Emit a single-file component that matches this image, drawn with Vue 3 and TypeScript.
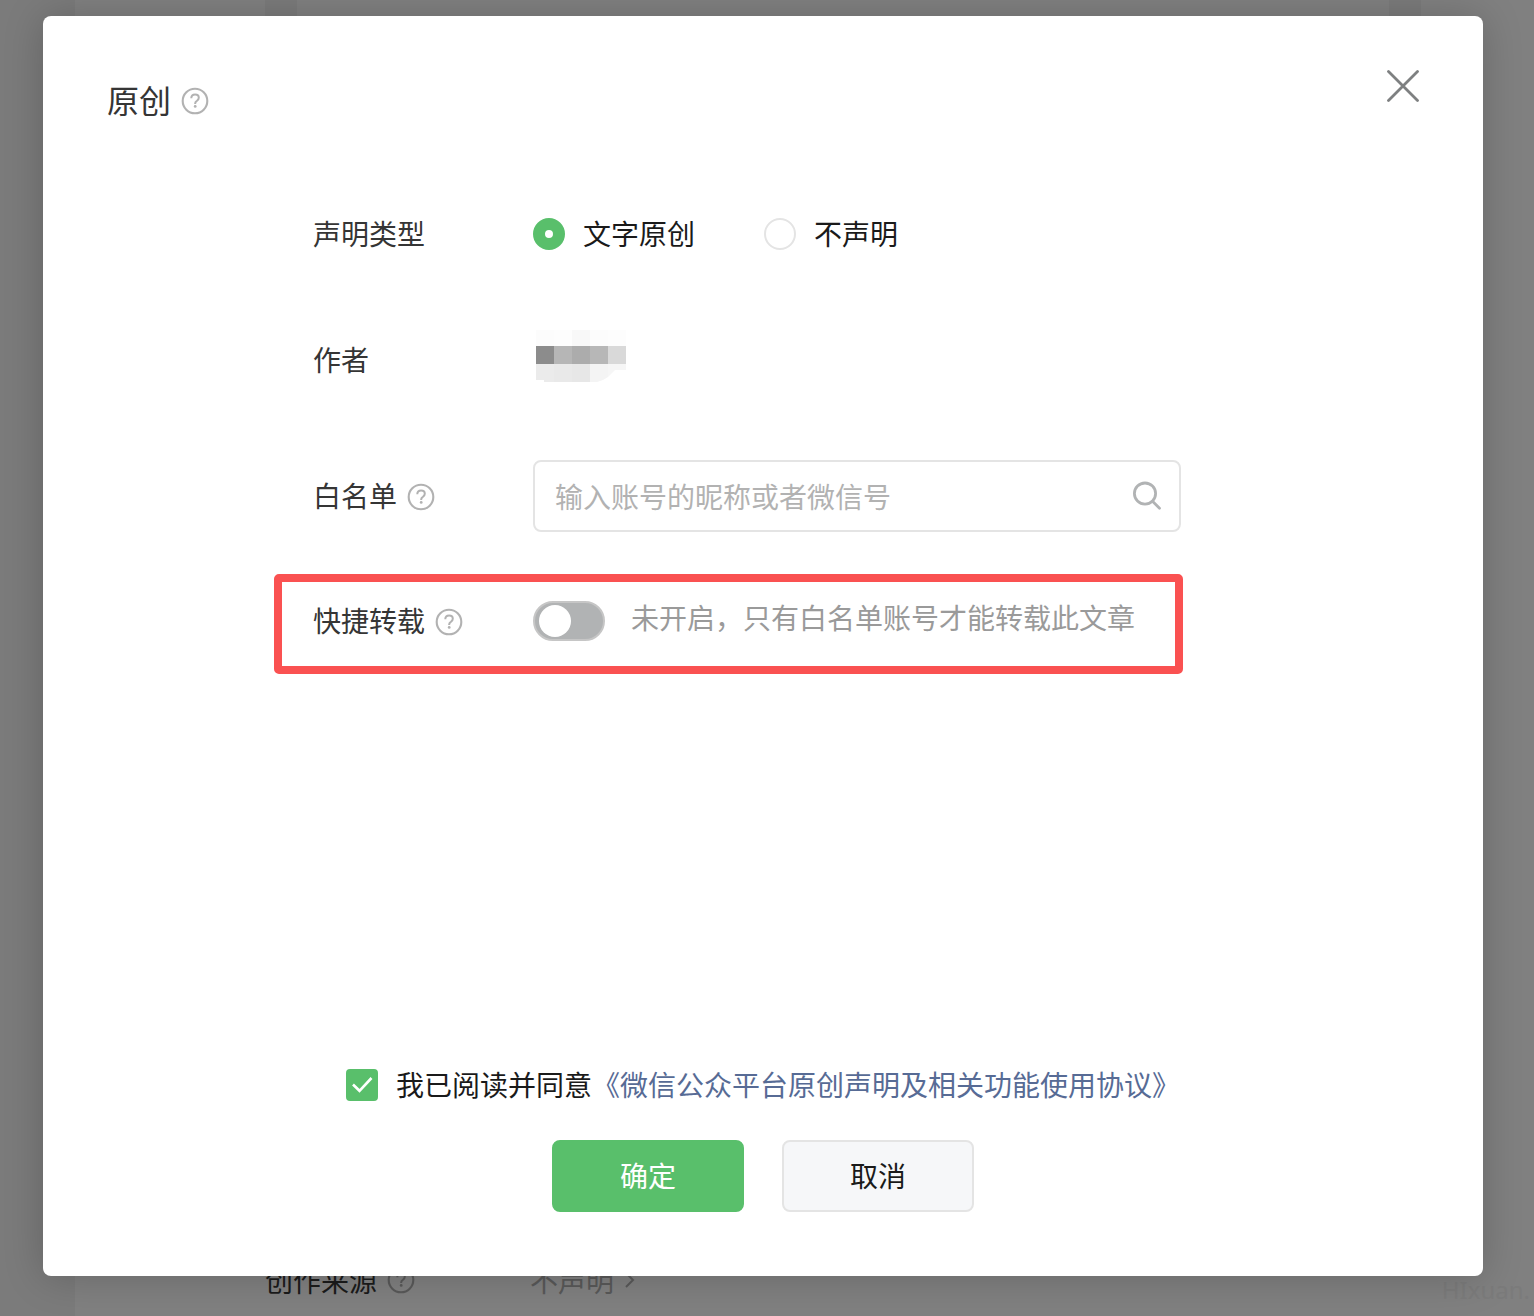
<script setup lang="ts">
import { ref } from 'vue'

const declareType = ref<'text' | 'none'>('text')
const keyword = ref('')
const quickReprint = ref(false)
const agreed = ref(true)

const declareOptions: { value: 'text' | 'none'; label: string }[] = [
  { value: 'text', label: '文字原创' },
  { value: 'none', label: '不声明' },
]

const mosaicRows = [
  { y: 0, height: 16, cells: ['#fcfcfc', '#fdfdfd', '#f8f8f8', '#fcfcfc', '#fdfdfd'] },
  { y: 16, height: 18, cells: ['#8c8c8c', '#b6b6b6', '#acacac', '#b7b7b7', '#d9d9d9'] },
]
</script>

<template>
  <div class="page">
    <div class="editor" aria-hidden="true">
      <div class="editor-top">
        <span class="stripe"></span>
        <span class="stripe"></span>
      </div>
      <div class="source">
        <span class="source-label">
          创作来源
          <svg class="help" viewBox="0 0 28 28"><use href="#help-shape" /></svg>
        </span>
        <span class="source-value">
          不声明
          <svg class="chevron" viewBox="0 0 12 20"><path d="M2 3l7 7-7 7" /></svg>
        </span>
        <span class="watermark">HIxuan.</span>
      </div>
    </div>

    <div class="overlay">
      <section class="dialog" role="dialog" aria-labelledby="dialog-title">
        <svg class="defs" aria-hidden="true">
          <symbol id="help-shape" viewBox="0 0 28 28">
            <circle cx="14" cy="14" r="12.3" fill="none" stroke="currentColor" stroke-width="2.1" />
            <path
              d="M10.3 11.2c0-2.200 1.500-3.700 3.800-3.700 2.200 0 3.700 1.300 3.700 3.200 0 1.300-.6 2.100-1.800 3-1.300.9-1.800 1.400-1.800 2.500v.7"
              fill="none" stroke="currentColor" stroke-width="2" />
            <circle cx="14.200" cy="19.400" r="1.400" fill="currentColor" />
          </symbol>
        </svg>

        <header class="head">
          <h1 id="dialog-title" class="title">
            原创
            <svg class="help" viewBox="0 0 28 28"><use href="#help-shape" /></svg>
          </h1>
          <button class="close" type="button" aria-label="关闭">
            <svg viewBox="0 0 32 32"><path d="M1.500 1.500L30.500 30.500M30.500 1.500L1.500 30.500" /></svg>
          </button>
        </header>

        <form class="form" @submit.prevent>
          <div class="row" role="radiogroup" aria-labelledby="declare-label">
            <span id="declare-label" class="label">声明类型</span>
            <div class="options">
              <label v-for="option in declareOptions" :key="option.value" class="option">
                <input v-model="declareType" class="radio" type="radio" name="declare" :value="option.value" />
                <span class="option-text">{{ option.label }}</span>
              </label>
            </div>
          </div>

          <div class="row">
            <span class="label">作者</span>
            <svg class="mosaic" viewBox="0 0 96 60" role="img" aria-label="作者">
              <template v-for="row in mosaicRows" :key="row.y">
                <rect
                  v-for="(fill, i) in row.cells" :key="i"
                  :x="3 + i * 18" :y="row.y" width="18" :height="row.height" :fill="fill" />
              </template>
              <path d="M3 34h18v18h-10v-2h-8z" fill="#ebebeb" />
              <path d="M21 34h18v18h-18z" fill="#e9e9e9" />
              <path d="M39 34h18v18h-18z" fill="#e7e7e7" />
              <path d="M57 34h18v13l-5 3-6 2h-7z" fill="#f4f4f4" />
              <path d="M75 34h18v6h-11l-4 4-3 3z" fill="#f6f6f6" />
            </svg>
          </div>

          <div class="row tall">
            <label class="label" for="whitelist">
              白名单
              <svg class="help" viewBox="0 0 28 28"><use href="#help-shape" /></svg>
            </label>
            <div class="search">
              <input id="whitelist" v-model="keyword" class="search-input" type="text" placeholder="输入账号的昵称或者微信号" />
              <button class="search-button" type="button" aria-label="搜索">
                <svg viewBox="0 0 32 32">
                  <circle cx="14" cy="13.600" r="10.600" />
                  <path d="M21.500 21.200l7 7" />
                </svg>
              </button>
            </div>
          </div>

          <div class="row marked">
            <label class="label" for="quick">
              快捷转载
              <svg class="help" viewBox="0 0 28 28"><use href="#help-shape" /></svg>
            </label>
            <input id="quick" v-model="quickReprint" class="switch" type="checkbox" role="switch" />
            <span class="hint">未开启，只有白名单账号才能转载此文章</span>
          </div>
        </form>

        <footer class="foot">
          <div class="agreement">
            <span class="tick">
              <input id="agree" v-model="agreed" class="tick-box" type="checkbox" />
              <svg v-if="agreed" class="tick-mark" viewBox="0 0 32 32"><path d="M7 15.500l6.500 6.300L25.500 9" /></svg>
            </span>
            <p class="agreement-text"><label for="agree">我已阅读并同意</label><a class="link" href="#">《微信公众平台原创声明及相关功能使用协议》</a></p>
          </div>
          <div class="actions">
            <button class="button primary" type="button">确定</button>
            <button class="button" type="button">取消</button>
          </div>
        </footer>
      </section>
    </div>
  </div>
</template>

<style>
body {
  margin: 0;
}
</style>

<style scoped>
.page,
.page * {
  box-sizing: border-box;
}

.page {
  position: relative;
  display: flex;
  min-height: 100vh;
  padding-left: 75px;
  background: #7b7b7b;
  color: #353535;
  font-family: "Noto Sans CJK SC", sans-serif;
  font-size: 28px;
  line-height: 44px;
}

.page button,
.page input {
  margin: 0;
  font: inherit;
}

.editor {
  display: flex;
  flex: 1;
  flex-direction: column;
  justify-content: space-between;
  background: #808080;
}

.editor-top {
  display: flex;
  justify-content: space-between;
  height: 64px;
  padding: 0 113px 0 190px;
}

.stripe {
  width: 32px;
  background: #7b7b7b;
}

.source {
  display: flex;
  align-items: center;
  padding: 0 4px 14px 190px;
}

.source-label,
.source-value {
  display: flex;
  align-items: center;
  gap: 10px;
}

.source-label {
  width: 265px;
  color: #1b1b1b;
}

.help {
  flex: none;
  width: 28px;
  height: 28px;
  color: #b2b2b2;
}

.source-label .help {
  color: #595959;
}

.source-value {
  color: #595959;
}

.chevron {
  width: 12px;
  height: 20px;
  fill: none;
  stroke: currentColor;
  stroke-width: 2;
}

.watermark {
  margin-left: auto;
  padding-top: 20px;
  color: #7b7b7b;
  font-family: "Noto Sans", sans-serif;
  font-size: 24px;
  line-height: 24px;
}

.overlay {
  position: absolute;
  inset: 0;
  display: flex;
  padding: 16px 51px 40px 43px;
}

.dialog {
  display: flex;
  flex: 1;
  flex-direction: column;
  padding: 54px 64px 64px;
  border-radius: 8px;
  background: #fff;
  box-shadow: 0 1px 40px rgba(0, 0, 0, 0.2);
}

.defs {
  position: absolute;
  width: 0;
  height: 0;
}

.head {
  display: flex;
  align-items: flex-start;
  justify-content: space-between;
  height: 56px;
}

.title {
  display: flex;
  align-items: center;
  gap: 10px;
  margin: 0;
  padding-top: 5px;
  font-size: 32px;
  font-weight: 400;
  line-height: 48px;
}

.title .help,
.label .help {
  margin-top: 4px;
}

.close {
  width: 32px;
  height: 32px;
  padding: 0;
  border: 0;
  background: none;
}

.close svg {
  display: block;
  fill: none;
  stroke: #7e8081;
  stroke-width: 2.8;
  stroke-linecap: round;
}

.form {
  display: flex;
  flex-direction: column;
  width: 909px;
  margin: 82px 0 0 167px;
}

.row {
  display: flex;
  align-items: center;
  height: 52px;
  margin-bottom: 74px;
  padding: 0 2px 0 39px;
}

.row.tall {
  height: 72px;
  margin-bottom: 42px;
}

.label {
  display: flex;
  flex: none;
  align-items: center;
  gap: 10px;
  width: 220px;
  padding-bottom: 2px;
}

.options {
  display: flex;
  gap: 69px;
}

.option {
  display: flex;
  align-items: center;
  gap: 18px;
  color: #1a1a1a;
}

.option-text {
  padding-bottom: 2px;
}

.radio {
  width: 32px;
  height: 32px;
  border: 2px solid #e4e4e4;
  border-radius: 50%;
  background: #fff;
  appearance: none;
}

.radio:checked {
  border: 12px solid #59bf6b;
}

.mosaic {
  flex: none;
  width: 96px;
  height: 60px;
}

.search {
  display: flex;
  flex: 1;
  align-items: center;
  height: 72px;
  padding: 0 16px 0 20px;
  border: 2px solid #e4e4e4;
  border-radius: 8px;
}

.search-input {
  flex: 1;
  min-width: 0;
  padding: 0;
  border: 0;
  outline: 0;
  background: none;
  color: #353535;
}

.search-input::placeholder {
  color: #b2b2b2;
  opacity: 1;
}

.search-button {
  width: 32px;
  height: 32px;
  padding: 0;
  border: 0;
  background: none;
}

.search-button svg {
  display: block;
  fill: none;
  stroke: #b1b3b4;
  stroke-width: 2.8;
  stroke-linecap: round;
}

.row.marked {
  height: 100px;
  margin-bottom: 0;
  padding: 0 0 6px 31px;
  border: 8px solid #fa5151;
  border-radius: 5px;
}

.switch {
  display: flex;
  flex: none;
  align-items: center;
  width: 72px;
  height: 40px;
  padding: 0 4px;
  border: 2px solid #c6c6c6;
  border-radius: 20px;
  background: #b1b3b4;
  appearance: none;
}

.switch::before {
  width: 32px;
  height: 32px;
  border-radius: 50%;
  background: #fff;
  content: "";
}

.switch:checked {
  justify-content: flex-end;
  border-color: #59bf6b;
  background: #59bf6b;
}

.hint {
  padding: 0 0 8px 26px;
  color: #9a9a9a;
  white-space: nowrap;
}

.foot {
  display: flex;
  flex-direction: column;
  align-items: center;
  gap: 32px;
  margin-top: auto;
}

.agreement {
  display: flex;
  align-items: center;
  gap: 18px;
  color: #1a1a1a;
}

.agreement-text {
  margin: 0;
  padding-bottom: 2px;
  white-space: nowrap;
}

.tick {
  display: grid;
  width: 32px;
  height: 32px;
}

.tick-box,
.tick-mark {
  grid-area: 1 / 1;
  width: 32px;
  height: 32px;
}

.tick-box {
  border: 2px solid #e4e4e4;
  border-radius: 4px;
  background: #fff;
  appearance: none;
}

.tick-box:checked {
  border-color: #59bf6b;
  background: #59bf6b;
}

.tick-mark {
  fill: none;
  stroke: #fff;
  stroke-width: 2.6;
  pointer-events: none;
}

.link {
  color: #576b95;
  text-decoration: none;
}

.actions {
  display: flex;
  gap: 38px;
}

.page .button {
  width: 192px;
  height: 72px;
  padding: 0 0 2px;
  border: 2px solid #e4e4e4;
  border-radius: 8px;
  background: #f6f7f9;
  color: #1a1a1a;
}

.page .button.primary {
  border-color: #59bf6b;
  background: #59bf6b;
  color: #fff;
}
</style>
